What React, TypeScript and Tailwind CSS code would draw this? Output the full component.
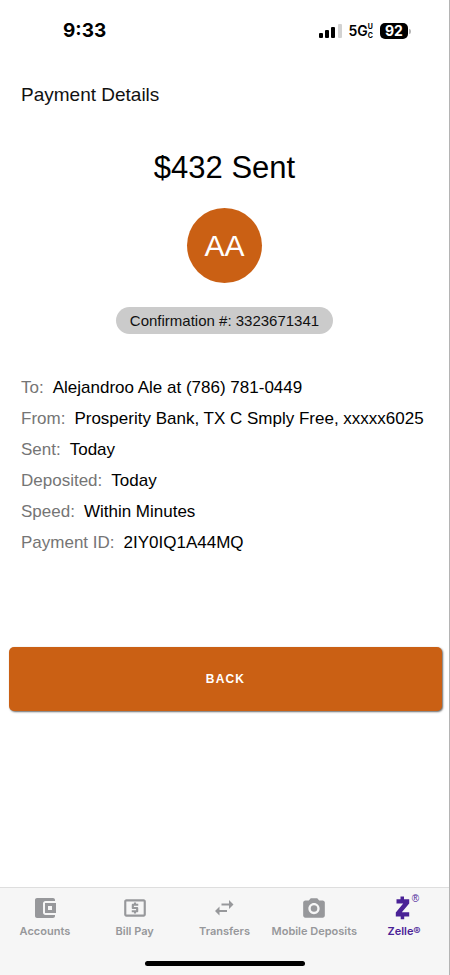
import type { ReactNode } from "react";

const details = [
  { label: "To:", value: "Alejandroo Ale at (786) 781-0449" },
  { label: "From:", value: "Prosperity Bank, TX C Smply Free, xxxxx6025" },
  { label: "Sent:", value: "Today" },
  { label: "Deposited:", value: "Today" },
  { label: "Speed:", value: "Within Minutes" },
  { label: "Payment ID:", value: "2IY0IQ1A44MQ" },
];

const StatusBar = () => {
  return (
    <div className="flex h-[62px] items-center justify-between pl-[63px] pr-[38px] font-['Inter',sans-serif] text-black">
      <span className="text-[19px] font-bold leading-6">9:33</span>

      <div className="flex items-center gap-[7px]">
        <svg width="23" height="16" viewBox="0 0 23 16" aria-hidden="true">
          <rect x="0" y="10" width="4" height="5" rx="1" />
          <rect x="6" y="7" width="4" height="8" rx="1" />
          <rect x="12" y="4" width="4" height="11" rx="1" />
          <rect x="19" y="1" width="4" height="14" rx="1" fill="#d2d2d2" />
        </svg>

        <div className="flex items-center">
          <span className="text-sm font-semibold leading-4">5G</span>
          <span className="flex flex-col text-[7px] font-bold leading-[9px]">
            <span>U</span>
            <span>C</span>
          </span>
        </div>

        <div className="flex items-center gap-px">
          <span className="flex h-4 w-7 items-center justify-center rounded-[5px] bg-black text-sm font-bold text-white">
            92
          </span>
          <span className="h-[5px] w-0.5 rounded-r-full bg-[#b5b5b5]"></span>
        </div>
      </div>
    </div>
  );
};

const WalletIcon = () => (
  <svg width="26" height="26" viewBox="0 0 26 26" fill="currentColor" aria-hidden="true">
    <path d="M5 3h16c1.100 0 2 .9 2 2v1h-9.500c-1.400 0-2.500 1.100-2.500 2.500v9c0 1.400 1.100 2.500 2.500 2.500H23v1c0 1.100-.9 2-2 2H5c-1.100 0-2-.9-2-2V5c0-1.100.9-2 2-2z" />
    <path fillRule="evenodd" d="M13 8h11v10H13zm3 3v4h4v-4z" />
  </svg>
);

const BillIcon = () => (
  <svg width="26" height="26" viewBox="0 0 24 24" fill="currentColor" aria-hidden="true">
    <path d="M11 17h2v-1h1c.55 0 1-.45 1-1v-3c0-.55-.45-1-1-1h-3v-1h4V8h-2V7h-2v1h-1c-.55 0-1 .45-1 1v3c0 .55.45 1 1 1h3v1H9v2h2v1zm9-13H4c-1.11 0-1.99.89-1.99 2L2 18c0 1.11.89 2 2 2h16c1.11 0 2-.89 2-2V6c0-1.11-.89-2-2-2zm0 14H4V6h16v12z" />
  </svg>
);

const TransferIcon = () => (
  <svg width="26" height="26" viewBox="0 0 26 26" fill="currentColor" aria-hidden="true">
    <path d="M18 5l4.500 4.500L18 14v-3.400h-7.500V8.400H18zM8.500 11.500L4 16l4.500 4.500v-3.400H16v-2.200H8.500z" />
  </svg>
);

const CameraIcon = () => (
  <svg width="26" height="26" viewBox="0 0 24 24" fill="currentColor" aria-hidden="true">
    <circle cx="12" cy="12.500" r="3" />
    <path d="M9 3L7.170 5H4c-1.100 0-2 .9-2 2v12c0 1.100.9 2 2 2h16c1.100 0 2-.9 2-2V7c0-1.100-.9-2-2-2h-3.170L15 3H9zm3 14.700c-2.870 0-5.200-2.330-5.200-5.200s2.330-5.200 5.200-5.200 5.200 2.330 5.200 5.200-2.330 5.200-5.200 5.200z" />
  </svg>
);

const ZelleIcon = () => (
  <span className="relative">
    <svg width="26" height="26" viewBox="0 0 26 26" fill="currentColor" aria-hidden="true">
      <path d="M9.500 1.500H13v2.700h5.200v4.200l-7.400 8.800h7.400v4.400h-5v2.700H9.700v-2.700H4.800v-4.200l7.400-8.800H5.500V4.200h4z" />
    </svg>
    <span className="absolute -right-0.5 -top-px font-['Liberation_Sans',Arial,sans-serif] text-[10px] leading-[10px]">
      ®
    </span>
  </span>
);

const tabs: { label: string; icon: ReactNode; active?: boolean }[] = [
  { label: "Accounts", icon: <WalletIcon /> },
  { label: "Bill Pay", icon: <BillIcon /> },
  { label: "Transfers", icon: <TransferIcon /> },
  { label: "Mobile Deposits", icon: <CameraIcon /> },
  { label: "Zelle®", icon: <ZelleIcon />, active: true },
];

const TabBar = () => {
  return (
    <footer className="border-t border-[#dedede] bg-[#f6f6f6] pb-[9px] font-['Inter',sans-serif]">
      <nav className="grid h-[73px] grid-cols-5 pt-[7px]">
        {tabs.map((tab) => (
          <a
            key={tab.label}
            href="#"
            aria-current={tab.active ? "page" : undefined}
            className={
              tab.active
                ? "flex flex-col items-center gap-[3px] text-[#4a2296]"
                : "flex flex-col items-center gap-[3px] text-[#97989b]"
            }
          >
            <span className="flex h-[26px]">{tab.icon}</span>
            <span className="whitespace-nowrap text-[11px] font-semibold leading-[14px]">
              {tab.label}
            </span>
          </a>
        ))}
      </nav>
      <div className="mx-auto h-[5px] w-40 rounded-full bg-black"></div>
    </footer>
  );
};

export default function App() {
  return (
    <div className="flex min-h-screen flex-col border-r border-[#b4b4b4] bg-white font-['Liberation_Sans',Arial,sans-serif] text-[#111111]">
      <StatusBar />

      <main className="flex flex-1 flex-col pb-10">
        <h1 className="px-[21px] pt-[21px] text-[19px] leading-6">Payment Details</h1>

        <section className="flex flex-col items-center pt-[41px]">
          <h2 className="text-[31px] leading-10 text-black">$432 Sent</h2>
          <div className="mt-5 flex size-[75px] items-center justify-center rounded-full bg-[#ca6014] text-[30px] text-white">
            AA
          </div>
          <p className="mt-6 rounded-full bg-[#cbcbcb] px-[14px] text-[15px] leading-[27px]">
            Confirmation #: 3323671341
          </p>
        </section>

        <dl className="mt-[38px] px-[21px] text-[17px] leading-[31px] text-black">
          {details.map((item) => (
            <div key={item.label} className="flex gap-[9px]">
              <dt className="text-[#757575]">{item.label}</dt>
              <dd>{item.value}</dd>
            </div>
          ))}
        </dl>

        <div className="mt-[89px] pl-[9px] pr-[7px]">
          <button
            type="button"
            className="h-16 w-full rounded-[5px] bg-[#ca6014] text-xs font-bold tracking-widest text-white shadow-[1px_1px_2px_rgba(0,0,0,0.6)]"
          >
            BACK
          </button>
        </div>
      </main>

      <TabBar />
    </div>
  );
}
